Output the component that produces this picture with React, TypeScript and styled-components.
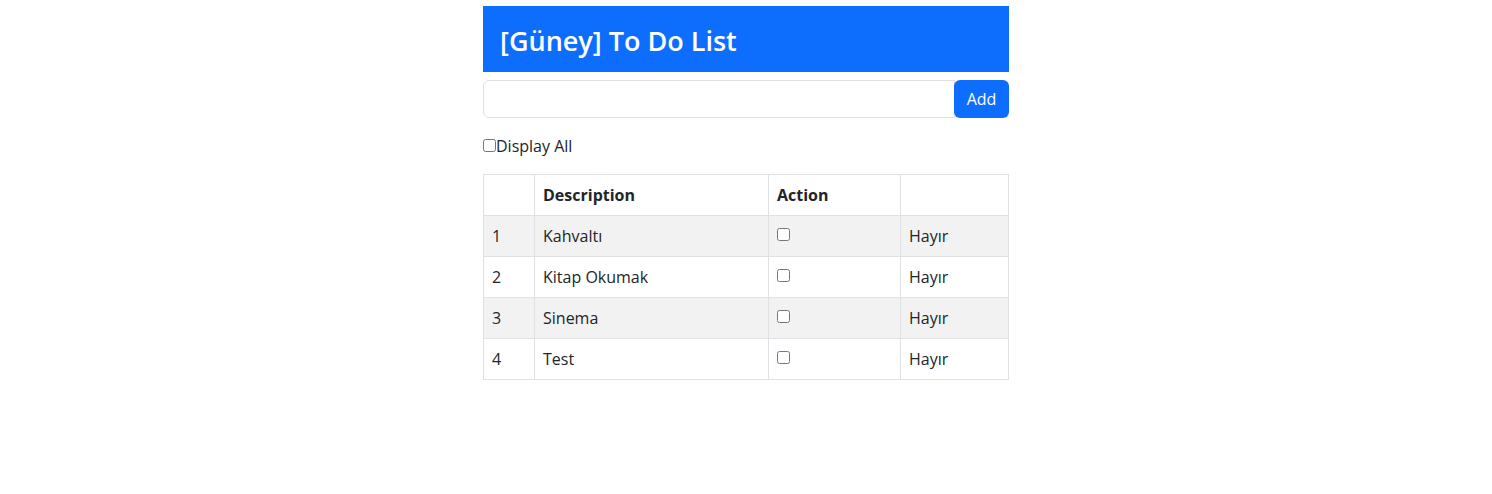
import React, { useState } from "react";
import styled, { createGlobalStyle } from "styled-components";

const GlobalStyle = createGlobalStyle`
  body {
    margin: 0;
    font-family: "Segoe UI", "Open Sans", "Liberation Sans", sans-serif;
    font-size: 16px;
    line-height: 1.5;
    color: #212529;
    background: #fff;
  }
  * { box-sizing: border-box; }
`;

const Container = styled.div`
  width: 526px;
  margin: 0 auto;
  padding-top: 6px;
`;

const Header = styled.div`
  background: #0d6efd;
  color: #fff;
  height: 66px;
  padding: 4px 17px 0;
  display: flex;
  align-items: center;
`;

const Title = styled.h3`
  margin: 0;
  font-size: 27px;
  font-weight: 600;
  line-height: 1.2;
`;

const InputRow = styled.div`
  display: flex;
  margin-top: 8px;
  height: 38px;
`;

const TextInput = styled.input`
  flex: 1;
  border: 1px solid #dee2e6;
  border-radius: 6px 0 0 6px;
  padding: 6px 12px;
  font: inherit;
  outline: none;
`;

const AddButton = styled.button`
  width: 55px;
  margin-left: -1px;
  border: none;
  border-radius: 6px;
  background: #0d6efd;
  color: #fff;
  font: inherit;
  cursor: pointer;
`;

const ToggleLabel = styled.label`
  display: flex;
  align-items: center;
  margin-top: 18px;
  height: 19px;
  font-size: 16px;
  color: #212529;
`;

const Check = styled.input`
  margin: 0;
  width: 13px;
  height: 13px;
`;

const Table = styled.table`
  margin-top: 19px;
  width: 100%;
  border-collapse: collapse;
  border: 1px solid #dee2e6;
`;

const Cell = styled.td<{ $w?: number; $head?: boolean }>`
  border: 1px solid #dee2e6;
  height: 41px;
  padding: 0 8px;
  width: ${(p) => (p.$w ? `${p.$w}px` : "auto")};
  font-weight: ${(p) => (p.$head ? 700 : 400)};
  vertical-align: middle;
  text-align: left;
`;

const Row = styled.tr<{ $striped?: boolean }>`
  background: ${(p) => (p.$striped ? "#f2f2f2" : "#fff")};
`;

const RowCheck = styled.input`
  margin: 0;
  width: 13px;
  height: 13px;
  position: relative;
  top: -3px;
  vertical-align: middle;
`;

const items = ["Kahvaltı", "Kitap Okumak", "Sinema", "Test"];

export default function App() {
  const [all, setAll] = useState(false);
  return (
    <Container>
      <GlobalStyle />
      <Header>
        <Title>[Güney] To Do List</Title>
      </Header>
      <InputRow>
        <TextInput />
        <AddButton>Add</AddButton>
      </InputRow>
      <ToggleLabel>
        <Check type="checkbox" checked={all} onChange={() => setAll(!all)} />
        Display All
      </ToggleLabel>
      <Table>
        <thead>
          <Row>
            <Cell as="th" $w={51} $head></Cell>
            <Cell as="th" $w={234} $head>Description</Cell>
            <Cell as="th" $w={132} $head>Action</Cell>
            <Cell as="th" $head></Cell>
          </Row>
        </thead>
        <tbody>
          {items.map((item, i) => (
            <Row key={item} $striped={i % 2 === 0}>
              <Cell>{i + 1}</Cell>
              <Cell>{item}</Cell>
              <Cell>
                <RowCheck type="checkbox" />
              </Cell>
              <Cell>Hayır</Cell>
            </Row>
          ))}
        </tbody>
      </Table>
    </Container>
  );
}
